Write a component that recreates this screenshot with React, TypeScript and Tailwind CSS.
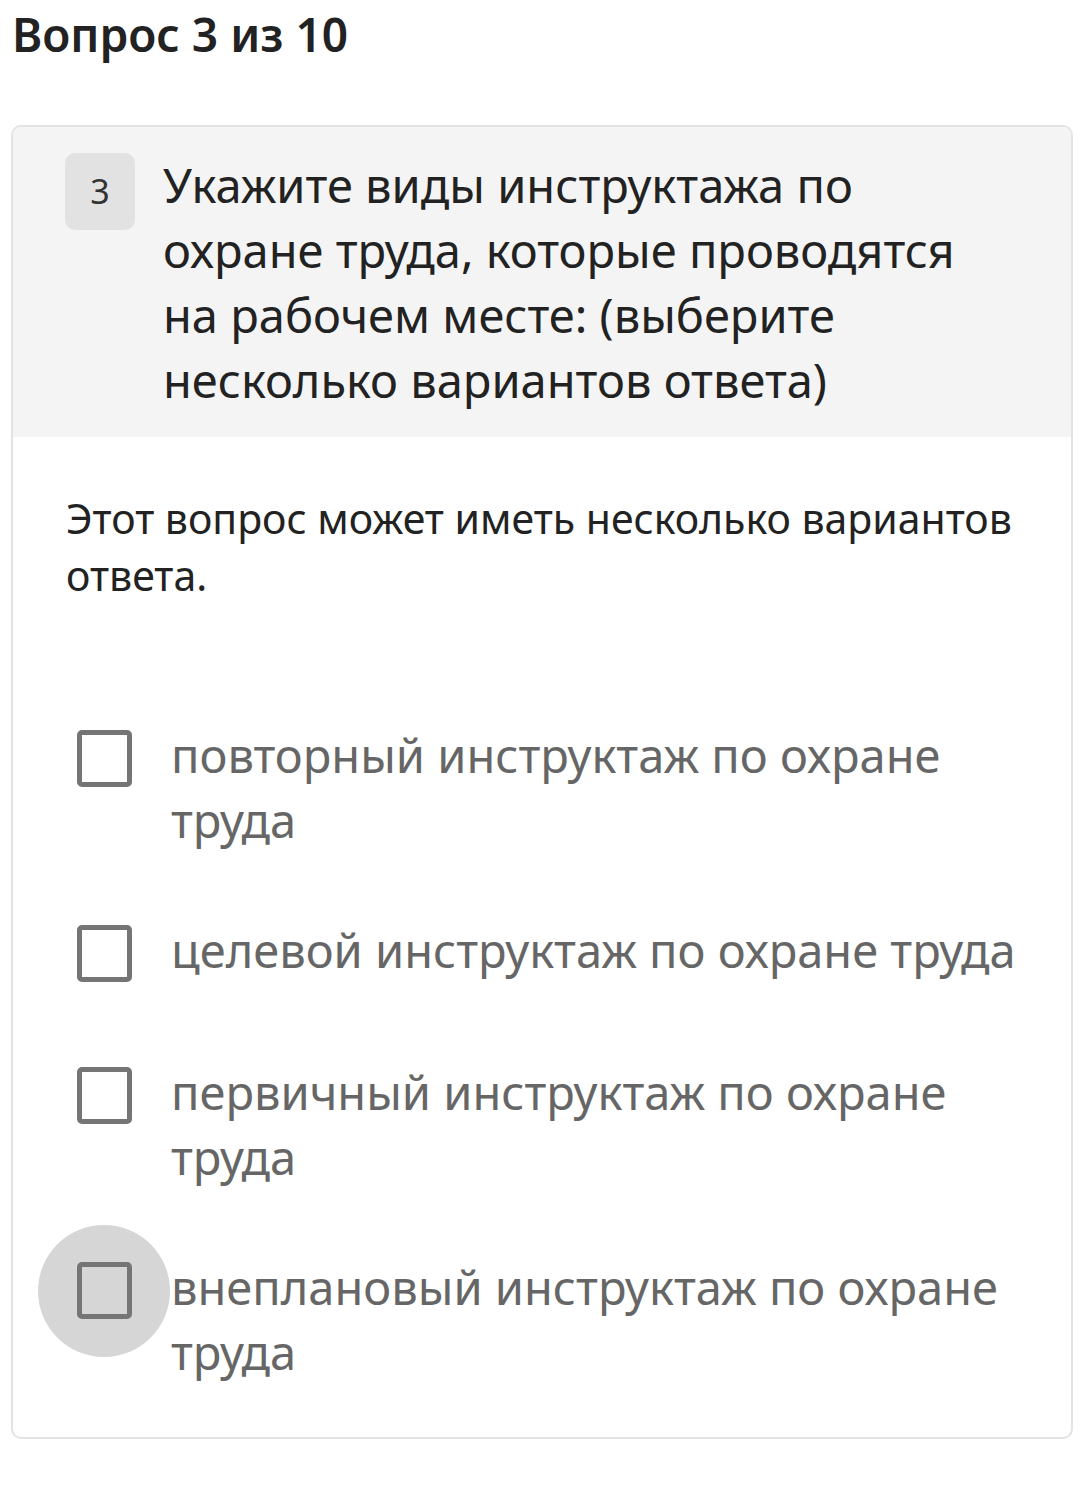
import React from 'react';

const options = [
  { text: 'повторный инструктаж по охране труда', gap: 'mt-0', focus: false },
  { text: 'целевой инструктаж по охране труда', gap: 'mt-[65px]', focus: false },
  { text: 'первичный инструктаж по охране труда', gap: 'mt-[77px]', focus: false },
  { text: 'внеплановый инструктаж по охране труда', gap: 'mt-[65px]', focus: true },
];

function Option({ text, gap, focus }: { text: string; gap: string; focus: boolean }) {
  return (
    <label className={`flex items-start pl-[25px] ${gap}`}>
      <div className="relative flex h-[65px] w-[132px] shrink-0 items-center justify-center pt-[6px]">
        {focus ? (
          <span className="absolute left-0 top-[-30px] h-[132px] w-[132px] rounded-full bg-[#d6d6d6]" />
        ) : null}
        <span className="relative block h-[57px] w-[55px] rounded-[5px] border-[5px] border-[#757575]" />
      </div>
      <span className="ml-[1px] pr-[30px] text-[47px] leading-[65px] text-[#666666]">{text}</span>
    </label>
  );
}

export default function App() {
  return (
    <main
      className="min-h-[1491px] bg-white pl-[11px] pr-[19px] pt-[2px]"
      style={{ fontFamily: '"Noto Sans", "Open Sans", sans-serif' }}
    >
      <h1 className="pl-[1px] text-[46px] font-semibold leading-[64px] text-[#222222]">Вопрос 3 из 10</h1>

      <section className="mt-[59px] overflow-hidden rounded-[10px] border-2 border-[#e3e3e3]">
        {/* шапка вопроса */}
        <div className="flex items-start bg-[#f4f4f4] pb-[24px] pl-[52px] pr-[86px] pt-[26px]">
          <div className="flex h-[77px] w-[70px] shrink-0 items-center justify-center rounded-[10px] bg-[#e2e2e2] text-[34px] text-[#333333]">
            3
          </div>
          <p className="ml-[28px] text-[47px] leading-[65px] text-[#222222]">
            Укажите виды инструктажа по охране труда, которые проводятся на рабочем месте: (выберите несколько
            вариантов ответа)
          </p>
        </div>

        <div className="pb-[52px] pt-[53px]">
          <p className="pl-[53px] pr-[30px] text-[41px] leading-[57px] text-[#222222]">
            Этот вопрос может иметь несколько вариантов ответа.
          </p>

          <div className="mt-[119px] flex flex-col">
            {options.map((o) => (
              <Option key={o.text} {...o} />
            ))}
          </div>
        </div>
      </section>
    </main>
  );
}
